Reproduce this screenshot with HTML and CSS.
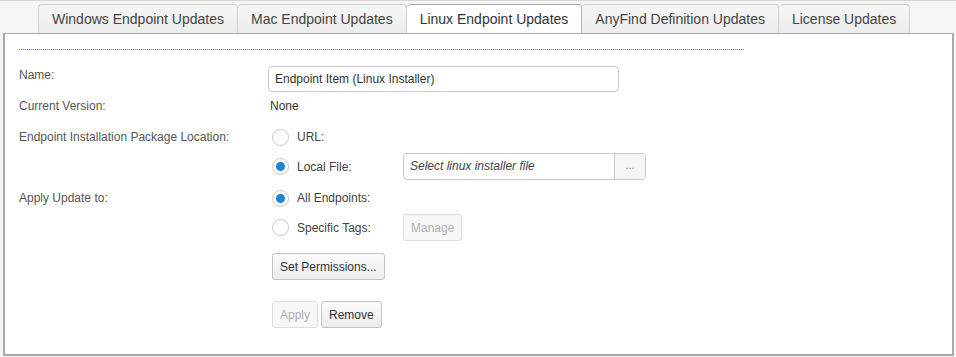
FILE: index.html
```html
<!DOCTYPE html>
<html lang="en">
<head>
    <meta charset="UTF-8">
    <title>Endpoint Updates</title>
    <link rel="stylesheet" href="styles.css">
</head>
<body>
    <div class="page">
        <ul class="tabs">
            <li>Windows Endpoint Updates</li>
            <li>Mac Endpoint Updates</li>
            <li class="active">Linux Endpoint Updates</li>
            <li>AnyFind Definition Updates</li>
            <li>License Updates</li>
        </ul>

        <div class="panel">
            <div class="divider"></div>

            <div class="row row-name">
                <div class="label">Name:</div>
                <div class="field">
                    <input type="text" class="text-input name-input" value="Endpoint Item (Linux Installer)">
                </div>
            </div>

            <div class="row row-version">
                <div class="label">Current Version:</div>
                <div class="field value">None</div>
            </div>

            <div class="row row-location">
                <div class="label">Endpoint Installation Package Location:</div>
                <div class="field options">
                    <div class="option opt-url">
                        <span class="radio"></span>
                        <span class="option-text">URL:</span>
                    </div>
                    <div class="option opt-local">
                        <span class="radio checked"></span>
                        <span class="option-text">Local File:</span>
                        <div class="file-picker">
                            <span class="file-name">Select linux installer file</span>
                            <span class="file-btn">...</span>
                        </div>
                    </div>
                </div>
            </div>

            <div class="row row-apply">
                <div class="label">Apply Update to:</div>
                <div class="field options">
                    <div class="option opt-all">
                        <span class="radio checked"></span>
                        <span class="option-text">All Endpoints:</span>
                    </div>
                    <div class="option opt-tags">
                        <span class="radio"></span>
                        <span class="option-text">Specific Tags:</span>
                        <button class="btn disabled manage-btn">Manage</button>
                    </div>
                </div>
            </div>

            <div class="row row-perms">
                <div class="label"></div>
                <div class="field">
                    <button class="btn">Set Permissions...</button>
                </div>
            </div>

            <div class="row row-actions">
                <div class="label"></div>
                <div class="field actions">
                    <button class="btn disabled">Apply</button>
                    <button class="btn">Remove</button>
                </div>
            </div>
        </div>
    </div>
</body>
</html>
```

FILE: styles.css
```css
/* General */
body {
    margin: 0;
    padding: 0;
    background-color: #f5f5f5;
    font-family: "Liberation Sans", Arial, sans-serif;
    color: #333;
}

.page {
    border-top: 1px solid #d6d6d6;
    padding: 3px 2px 0 3px;
}

/* Tabs */
.tabs {
    display: flex;
    list-style: none;
    margin: 0 0 0 35px;
    padding: 0;
    height: 29px;
}

.tabs li {
    height: 29px;
    box-sizing: border-box;
    padding: 0 13px;
    line-height: 29px;
    font-size: 14px;
    color: #444;
    background: linear-gradient(#f6f6f6, #ededed);
    border: 1px solid #cfcfcf;
    border-bottom: none;
    border-left: none;
    border-radius: 4px 4px 0 0;
}

.tabs li:first-child {
    border-left: 1px solid #cfcfcf;
}

.tabs li.active {
    background: #fff;
    color: #333;
    border-color: #b4b4b4;
    border-top: 1px solid #a8a8a8;
    position: relative;
    top: 1px;
    margin-top: -1px;
}

/* Panel */
.panel {
    background: #fff;
    border: 1px solid #a9a9a9;
    border-width: 1px 2px 2px 2px;
    height: 323px;
    box-sizing: border-box;
    padding: 15px 0 0 14px;
    font-size: 12px;
}

.divider {
    width: 725px;
    height: 1px;
    background: repeating-linear-gradient(to right, #2fa0e6 0 1px, #bfe2f7 1px 2px);
    margin-bottom: 16px;
}

/* Rows */
.row {
    display: flex;
    align-items: flex-start;
}

.label {
    width: 251px;
    flex-shrink: 0;
    color: #555;
}

.field {
    flex: 1;
}

.row-name .label {
    padding-top: 2px;
}

.row-version {
    margin-top: 7px;
}

.value {
    color: #333;
}

.row-location {
    margin-top: 12px;
}

.row-location .label,
.row-apply .label {
    padding-top: 5px;
}

.row-apply {
    margin-top: 6px;
}

.row-perms {
    margin-top: 12px;
}

.row-actions {
    margin-top: 21px;
}

/* Inputs */
.text-input {
    font-family: inherit;
    font-size: 12px;
    color: #333;
    border: 1px solid #c8c8c8;
    border-radius: 4px;
    padding: 0 6px;
    box-sizing: border-box;
    outline: none;
}

.name-input {
    width: 351px;
    height: 26px;
    margin-left: -2px;
}

/* Radio options */
.options {
    display: flex;
    flex-direction: column;
}

.option {
    display: flex;
    align-items: center;
}

.opt-url,
.opt-all {
    height: 24px;
}

.opt-local,
.opt-tags {
    margin-top: 4px;
}

.radio {
    width: 17px;
    height: 17px;
    box-sizing: border-box;
    border: 1px solid #c9c9c9;
    border-radius: 50%;
    background: #fff;
    margin-left: 2px;
    margin-right: 8px;
    position: relative;
}

.radio.checked::after {
    content: "";
    position: absolute;
    left: 3px;
    top: 3px;
    width: 9px;
    height: 9px;
    border-radius: 50%;
    background: #1a86d6;
}

.option-text {
    color: #444;
    width: 106px;
}

.file-picker {
    display: flex;
    width: 243px;
    height: 27px;
    border: 1px solid #c8c8c8;
    border-radius: 4px;
    box-sizing: border-box;
    overflow: hidden;
}

.file-name {
    flex: 1;
    font-style: italic;
    color: #444;
    line-height: 25px;
    padding-left: 6px;
}

.file-btn {
    width: 30px;
    border-left: 1px solid #c8c8c8;
    background: #f5f5f5;
    color: #888;
    text-align: center;
    line-height: 23px;
    font-size: 11px;
}

/* Buttons */
.btn {
    font-family: inherit;
    font-size: 12px;
    color: #333;
    height: 27px;
    padding: 0 7px;
    border: 1px solid #c3c3c3;
    border-radius: 3px;
    background: linear-gradient(#fbfbfb, #ececec);
    margin-left: 2px;
}

.btn.disabled {
    color: #b0b0b0;
    border-color: #dedede;
    background: #f7f7f7;
}

.manage-btn {
    margin-left: 0;
}

.actions {
    display: flex;
    gap: 1px;
}
```
